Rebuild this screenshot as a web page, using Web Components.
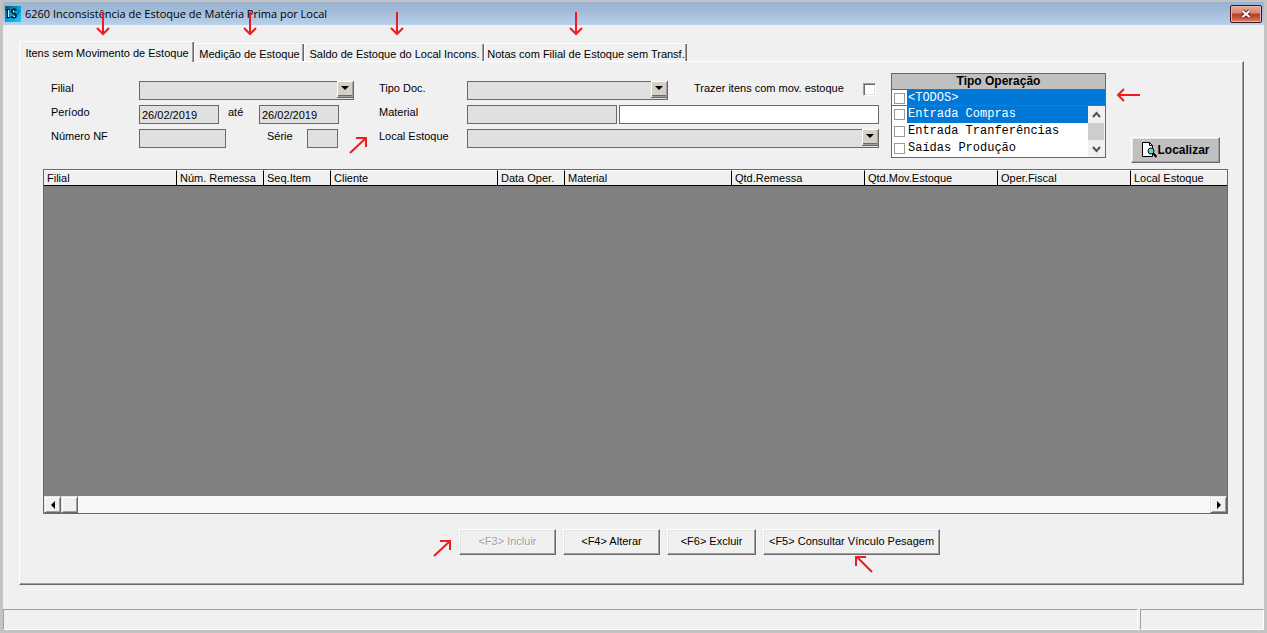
<!DOCTYPE html>
<html lang="pt-BR">
<head>
<meta charset="utf-8">
<title>6260 Inconsistência de Estoque de Matéria Prima por Local</title>
<style>
  body { margin: 0; font: 11px/16px "Liberation Sans", Arial, sans-serif; color: #000; background: #c3c3c3; }
  .tabs { display: flex; align-items: flex-end; margin-bottom: -1px; position: relative; }
  .filters { display: flex; align-items: flex-start; padding: 0 23px 0 31px; }
  .group { display: grid; gap: 5px; margin-top: 8px; }
  .group + .group { margin-left: 25px; }
  .line { display: flex; }
  op-list { margin-left: 12px; }
  .filters action-button { margin: 64px 0 0 auto; }
  .actions { display: flex; gap: 7px; padding-left: 439px; }
  mark-arrow { position: absolute; }
</style>
</head>
<body>
<app-window>
  <title-bar slot="title">6260 Inconsistência de Estoque de Matéria Prima por Local</title-bar>
  <div class="tabs" role="tablist">
    <tab-item selected style="--w:175px">Itens sem Movimento de Estoque</tab-item>
    <tab-item style="--w:110px">Medição de Estoque</tab-item>
    <tab-item style="--w:180px">Saldo de Estoque do Local Incons.</tab-item>
    <tab-item style="--w:203px">Notas com Filial de Estoque sem Transf.</tab-item>
  </div>
  <tab-panel>
    <div class="filters">
      <div class="group">
        <div class="line"><form-field kind="select" label="Filial" style="--label:88px;--w:215px"></form-field></div>
        <div class="line">
          <form-field label="Período" value="26/02/2019" style="--label:88px;--w:80px"></form-field>
          <form-field label="até" value="26/02/2019" style="--gap:9px;--label:31px;--w:80px"></form-field>
        </div>
        <div class="line">
          <form-field label="Número NF" style="--label:88px;--w:87px"></form-field>
          <form-field label="Série" style="--gap:41px;--label:40px;--w:31px"></form-field>
        </div>
      </div>
      <div class="group">
        <div class="line">
          <form-field kind="select" label="Tipo Doc." style="--label:88px;--w:201px"></form-field>
          <form-field kind="check" label="Trazer itens com mov. estoque" style="--gap:26px;--label:169px"></form-field>
        </div>
        <div class="line">
          <form-field label="Material" style="--label:88px;--w:150px"></form-field>
          <form-field hint="Descrição do material" style="--gap:2px;--w:260px;--fill:#fff"></form-field>
        </div>
        <div class="line"><form-field kind="select" label="Local Estoque" style="--label:88px;--w:412px"></form-field></div>
      </div>
      <op-list></op-list>
      <action-button strong style="--w:89px">
        <svg slot="icon" width="16" height="17" viewBox="0 0 16 17"><path d="M1.500 .5h7l3 3v11h-10z" fill="#fff" stroke="#000"/><path d="M8.500 .5v3h3" fill="none" stroke="#000"/><circle cx="10" cy="9" r="3" fill="#5fd8d8" stroke="#000"/><path d="M12 11l3.500 4" stroke="#000" stroke-width="2"/></svg>Localizar</action-button>
    </div>
    <data-grid></data-grid>
    <div class="actions">
      <action-button disabled style="--w:97px">&lt;F3&gt; Incluir</action-button>
      <action-button style="--w:97px">&lt;F4&gt; Alterar</action-button>
      <action-button style="--w:89px">&lt;F6&gt; Excluir</action-button>
      <action-button style="--w:177px">&lt;F5&gt; Consultar Vínculo Pesagem</action-button>
    </div>
  </tab-panel>
  <status-bar slot="status"></status-bar>
  <mark-arrow slot="marks" dir="down" style="left:96px;top:12px"></mark-arrow>
  <mark-arrow slot="marks" dir="down" style="left:243px;top:12px"></mark-arrow>
  <mark-arrow slot="marks" dir="down" style="left:390px;top:12px"></mark-arrow>
  <mark-arrow slot="marks" dir="down" style="left:569px;top:12px"></mark-arrow>
  <mark-arrow slot="marks" dir="ne" style="left:349px;top:136px"></mark-arrow>
  <mark-arrow slot="marks" dir="left" style="left:1116px;top:88px"></mark-arrow>
  <mark-arrow slot="marks" dir="ne" style="left:433px;bottom:75px"></mark-arrow>
  <mark-arrow slot="marks" dir="nw" style="left:854px;bottom:59px"></mark-arrow>
</app-window>

<script>
const define = (name, render) => customElements.define(name, class extends HTMLElement {
  constructor() { super(); this.attachShadow({ mode: 'open' }); }
  connectedCallback() { this.shadowRoot.innerHTML = render(this); }
});

define('app-window', () => `<style>
  :host { display: flex; flex-direction: column; position: relative; box-sizing: border-box; min-height: 100vh;
    border: 3px solid #c3c3c3; border-top-width: 2px; background: #f0f0f0; }
  main { flex: 1; display: flex; flex-direction: column; padding: 16px 20px 24px 16px; }
  .marks { position: absolute; top: -2px; left: -3px; right: -3px; bottom: -3px; pointer-events: none; }
</style><slot name="title"></slot><main><slot></slot></main><slot name="status"></slot>
<div class="marks"><slot name="marks"></slot></div>`);

define('title-bar', () => `<style>
  :host { display: flex; align-items: center; height: 23px; padding: 0 2px; gap: 4px;
    background: linear-gradient(#99b4d1, #9fb8d4 30%, #b9d1ea); font: 11px/18px "Open Sans", "Noto Sans", sans-serif; }
  h1 { flex: 1; margin: 0; font: inherit; white-space: nowrap; }
  button { width: 32px; height: 18px; padding: 0; border: 1px solid #43131a; border-radius: 2px;
    background: linear-gradient(#e8a89a, #d78674 45%, #b83c20 50%, #c5573b 75%, #d98870); box-shadow: inset 0 0 0 1px #e9b3a5; }
  button svg { display: block; margin: auto; }
</style>
<svg width="16" height="16" viewBox="0 0 16 16"><defs><linearGradient id="g" x2="1" y2="1"><stop stop-color="#0a4f68"/><stop offset=".55" stop-color="#00a9e8"/><stop offset="1" stop-color="#20c8ff"/></linearGradient></defs>
<path fill="url(#g)" d="M0 0h16v16H0z"/><path d="M1 3h4v1H4v7h1v1H1v-1h1V4H1z" fill="#071c28"/><path d="M3.500 4v7" stroke="#d9f5ff"/><path d="M11.500 4.500C10 2.500 6.500 3 7 5.500s4 1.500 4 4-4 2.500-5 1" fill="none" stroke="#071c28" stroke-width="2"/><path d="M8.500 4.500v2M8.500 10.500h1.500" stroke="#d9f5ff"/><path d="M12 9l3-5" stroke="#064f70"/></svg>
<h1><slot></slot></h1>
<button aria-label="Fechar"><svg width="12" height="10" viewBox="0 0 12 10"><path d="M2.500 2l7 6M9.500 2l-7 6" stroke="#5b2a2a" stroke-width="4"/><path d="M2.500 2l7 6M9.500 2l-7 6" stroke="#fff" stroke-width="2"/></svg></button>`);

define('tab-item', el => `<style>
  :host { display: block; width: var(--w); height: 18px; padding-bottom: 1px; }
  :host([selected]) { height: 21px; padding: 0; }
  button { box-sizing: border-box; width: 100%; height: 100%; padding: 2px 2px 0; font: inherit; color: inherit; white-space: nowrap;
    background: #f0f0f0; border: 1px solid #fff; border-right: 0; border-bottom: 0; border-radius: 3px 0 0 0;
    box-shadow: inset -1px 0 #696969, inset -2px 0 #a0a0a0; }
</style><button role="tab" aria-selected="${el.hasAttribute('selected')}"><slot></slot></button>`);

define('tab-panel', () => `<style>
  :host { flex: 1; display: flex; flex-direction: column; padding: 11px 0 29px; background: transparent;
    border: 1px solid #fff; border-right-color: #696969; border-bottom-color: #696969; box-shadow: inset -1px -1px #a0a0a0; }
</style><slot></slot>`);

define('form-field', el => {
  const kind = el.getAttribute('kind') || 'text';
  const label = el.getAttribute('label');
  const hint = el.getAttribute('hint');
  const name = hint ? ` aria-label="${hint}"` : '';
  const control = {
    text: `<input id="c" type="text" value="${el.getAttribute('value') || ''}"${name}>`,
    check: '<input id="c" type="checkbox">',
    select: '<span class="drop"><select id="c"><option></option></select><svg width="17" height="17" viewBox="0 0 17 17"><path fill="#696969" d="M0 0h17v17H0z"/><path fill="#fff" d="M0 0h16v1H1v15H0z"/><path fill="#a0a0a0" d="M1 15h14V1h1v15H1z"/><path fill="#d4d0c8" d="M1 1h14v13H1z"/><path d="M4 5h8L8 9z"/></svg></span>'
  }[kind];
  return `<style>
  :host { display: flex; margin-left: var(--gap, 0); height: 19px; }
  label { width: var(--label); line-height: 15px; white-space: nowrap; }
  input, select { box-sizing: border-box; width: var(--w); height: 19px; margin: 0; padding: 0 2px; font: inherit; color: #000;
    background: var(--fill, #e0e0e0); border: 1px solid #696969; border-radius: 0; appearance: none; }
  input[type=checkbox] { width: 13px; height: 13px; margin-top: 2px; background: #fff; border: 1px solid #fff;
    border-top-color: #a0a0a0; border-left-color: #a0a0a0; box-shadow: inset 1px 1px #696969, inset -1px -1px #e3e3e3; }
  .drop { display: grid; }
  .drop > * { grid-area: 1 / 1; }
  svg { justify-self: end; pointer-events: none; }
</style>${label ? `<label for="c">${label}</label>` : ''}${control}`;
});

define('op-list', () => {
  const row = (t, on) => `<label class="${on ? 'on' : ''}"><input type="checkbox"><span>${t}</span></label>`;
  return `<style>
  :host { display: block; box-sizing: border-box; width: 215px; height: 85px; border: 1px solid #696969; background: #fff; }
  h2 { margin: 0; height: 15px; font: bold 12px/15px "Liberation Sans", Arial, sans-serif; text-align: center; background: #c0c0c0; border-bottom: 1px solid #696969; }
  label { display: flex; height: 17px; font: 12px/17px "Liberation Mono", monospace; white-space: nowrap; }
  span { flex: 1; padding-left: 1px; }
  .on span { background: #0078d7; color: #fff; }
  .first label { height: 15px; line-height: 16px; border-bottom: 1px solid #696969; }
  .rest { display: flex; }
  .items { flex: 1; min-width: 0; }
  input { appearance: none; box-sizing: border-box; width: 11px; height: 11px; margin: 3px 2px 0; border: 1px solid #999; background: #fff; }
  .bar { display: flex; flex-direction: column; width: 17px; height: 51px; background: #f0f0f0; }
  .thumb { flex: 1; margin-right: 1px; background: #cdcdcd; }
</style><h2>Tipo Operação</h2>
<div class="first">${row('&lt;TODOS&gt;', 1)}</div>
<div class="rest"><div class="items">${row('Entrada Compras', 1)}${row('Entrada Tranferências')}${row('Saídas Produção')}</div>
<div class="bar"><svg width="17" height="17"><path d="M5 11l3.500-4L12 11" fill="none" stroke="#505050" stroke-width="2"/></svg><div class="thumb"></div><svg width="17" height="17"><path d="M5 7l3.500 4L12 7" fill="none" stroke="#505050" stroke-width="2"/></svg></div></div>`;
});

define('action-button', el => `<style>
  :host { display: block; width: var(--w); }
  button { display: flex; align-items: center; justify-content: center; box-sizing: border-box; width: 100%; height: 26px; padding: 0 0 2px;
    font: inherit; color: #000; white-space: nowrap; background: #f0f0f0;
    border: 1px solid #fff; border-right-color: #696969; border-bottom-color: #696969;
    box-shadow: inset -1px -1px #a0a0a0, inset 1px 1px #e3e3e3; }
  button:disabled { color: #a0a0a0; text-shadow: 1px 1px #fff; }
  :host([strong]) button { background: #c0c0c0; font-size: 12px; font-weight: bold; padding: 0; }
</style><button${el.hasAttribute('disabled') ? ' disabled' : ''}><slot name="icon"></slot><span><slot></slot></span></button>`);

define('data-grid', () => {
  const cols = [['Filial', 133], ['Núm. Remessa', 87], ['Seq.Item', 67], ['Cliente', 167], ['Data Oper.', 67], ['Material', 167],
    ['Qtd.Remessa', 133], ['Qtd.Mov.Estoque', 133], ['Oper.Fiscal', 133], ['Local Estoque', 0]];
  return `<style>
  :host { flex: 1; display: flex; flex-direction: column; margin: 6px 15px 15px 23px; border: 1px solid #696969; background: #808080; }
  table { width: 100%; table-layout: fixed; border-collapse: separate; border-spacing: 0; background: #f0f0f0; }
  th { box-sizing: border-box; height: 16px; padding: 0 3px; font-weight: normal; line-height: 14px; text-align: left; white-space: nowrap;
    border-top: 1px solid #fff; border-bottom: 1px solid #000; border-right: 1px solid #000; }
  th:last-child { border-right: 0; }
  .space { flex: 1; }
  .bar { display: flex; height: 17px; background: repeating-conic-gradient(#fff 0 25%, #f0f0f0 0 50%) 0 0 / 2px 2px; }
  .bar button, .thumb { box-sizing: border-box; width: 17px; height: 17px; padding: 0; background: #f0f0f0; border: 1px solid #e3e3e3;
    border-right-color: #696969; border-bottom-color: #696969; box-shadow: inset 1px 1px #fff, inset -1px -1px #a0a0a0; }
  .bar button:last-child { margin-left: auto; }
  svg { display: block; margin: auto; }
</style><table><colgroup>${cols.map(c => `<col${c[1] ? ` style="width:${c[1]}px"` : ''}>`).join('')}</colgroup>
<thead><tr>${cols.map(c => `<th scope="col">${c[0]}</th>`).join('')}</tr></thead></table>
<div class="space"></div>
<div class="bar"><button aria-label="Rolar para a esquerda"><svg width="8" height="8"><path d="M6 0v8L2 4z"/></svg></button><div class="thumb"></div>
<button aria-label="Rolar para a direita"><svg width="8" height="8"><path d="M2 0v8l4-4z"/></svg></button></div>`;
});

define('status-bar', () => `<style>
  :host { display: grid; grid-template-columns: 1fr 124px; gap: 2px; height: 21px; }
  div { border: 1px solid #fff; border-top-color: #a0a0a0; border-left-color: #a0a0a0; }
</style><div></div><div></div>`);

define('mark-arrow', el => {
  const [w, h, d] = {
    down: [14, 24, 'M7 0v22M1 16l6 6 6-6'],
    left: [24, 14, 'M24 7H2M8 1L2 7l6 6'],
    ne: [19, 19, 'M1 17L17 2M7 2h10v9'],
    nw: [19, 19, 'M18 17L3 2M12 2H2v9']
  }[el.getAttribute('dir')];
  return `<style>:host { display: block; } svg { display: block; }</style>
<svg width="${w}" height="${h}"><path d="${d}" fill="none" stroke="#ed1c24" stroke-width="2"/></svg>`;
});
</script>
</body>
</html>
